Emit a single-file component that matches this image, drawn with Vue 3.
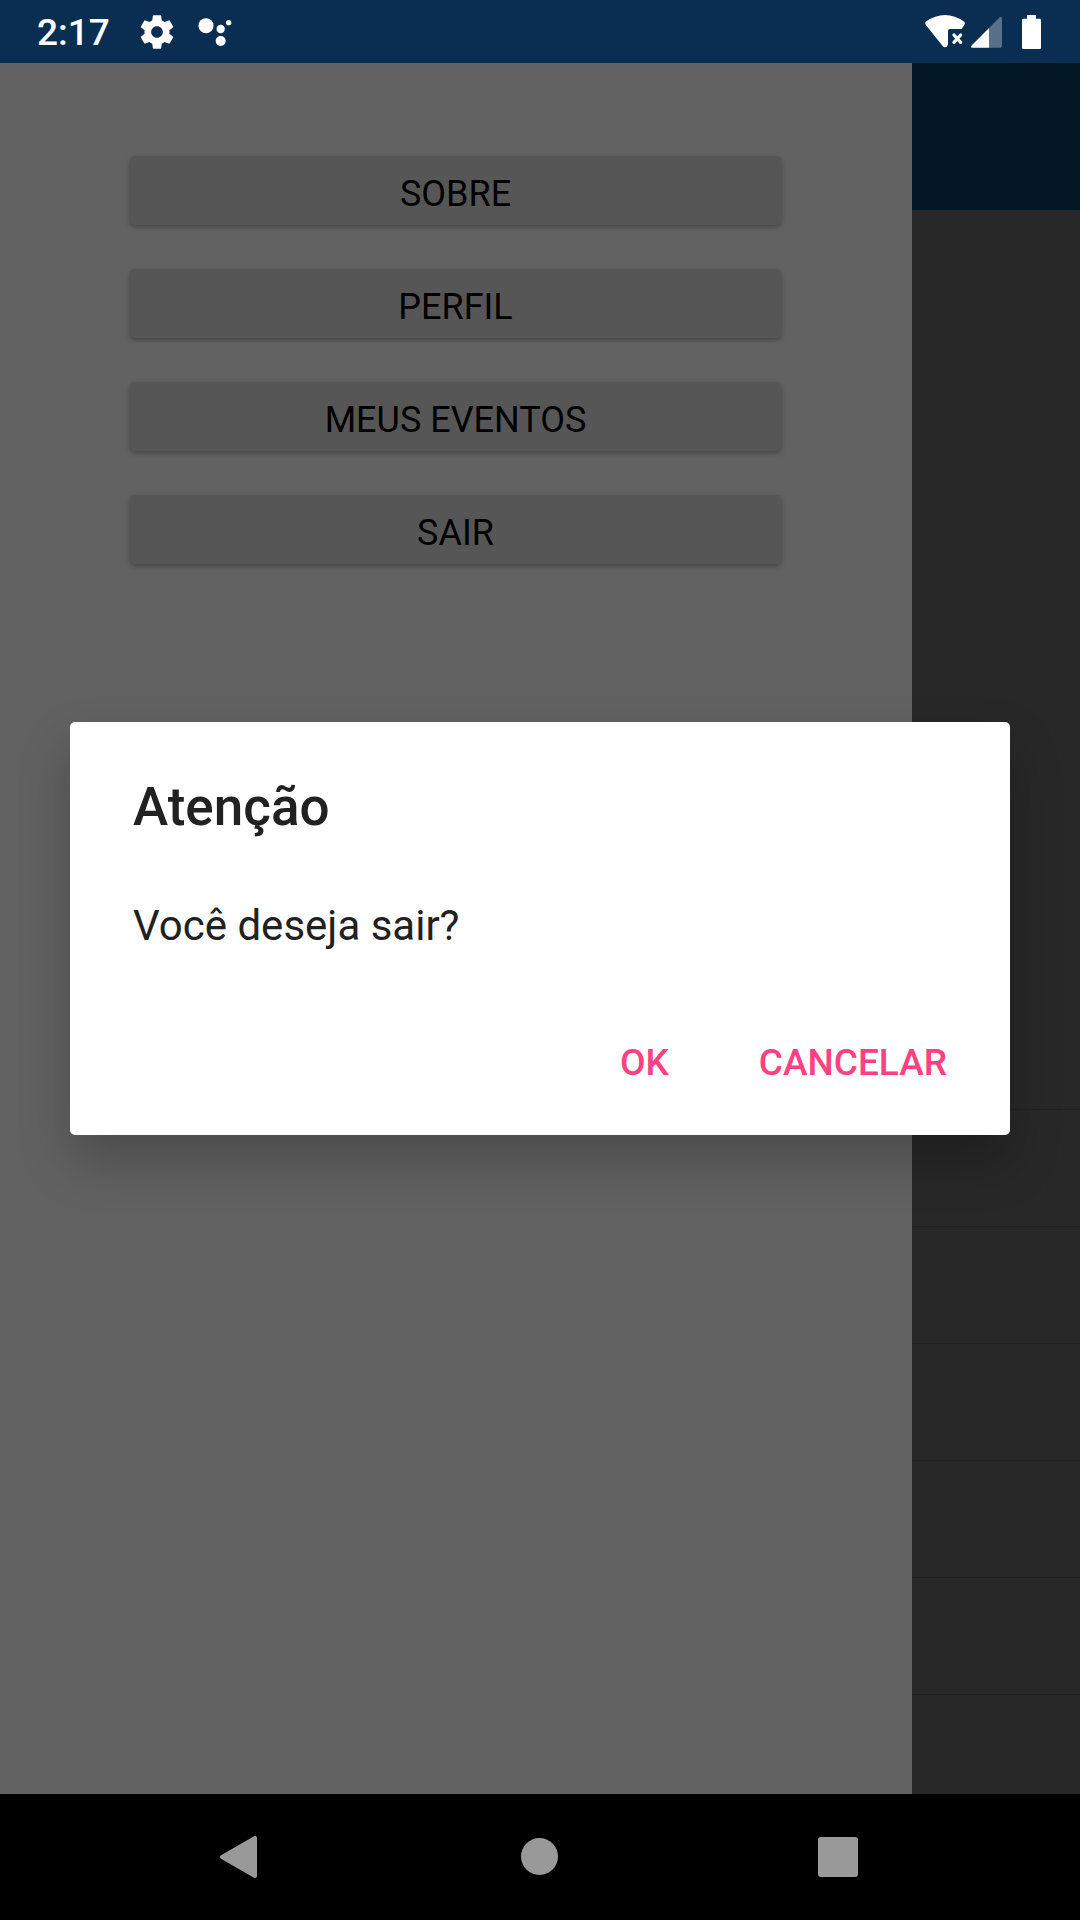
<script setup>
const menu = ['SOBRE', 'PERFIL', 'MEUS EVENTOS', 'SAIR']
const rows = 6
</script>

<template>
  <div class="screen">
    <header class="status">
      <span class="clock">2:17</span>
      <svg class="gear" width="40" height="40" viewBox="0 0 24 24" aria-hidden="true">
        <path fill="#fff" d="M19.43 12.98c.04-.32.07-.64.07-.98s-.03-.66-.07-.98l2.11-1.65c.19-.15.24-.42.12-.64l-2-3.46c-.12-.22-.39-.3-.61-.22l-2.49 1c-.52-.4-1.08-.73-1.69-.98l-.38-2.65C14.46 2.18 14.25 2 14 2h-4c-.25 0-.46.18-.49.42l-.38 2.65c-.61.25-1.17.59-1.69.98l-2.49-1c-.23-.09-.49 0-.61.22l-2 3.46c-.13.22-.07.49.12.64l2.11 1.65c-.04.32-.07.65-.07.98s.03.66.07.98l-2.11 1.65c-.19.15-.24.42-.12.64l2 3.46c.12.22.39.3.61.22l2.49-1c.52.4 1.08.73 1.69.98l.38 2.65c.03.24.24.42.49.42h4c.25 0 .46-.18.49-.42l.38-2.65c.61-.25 1.17-.59 1.69-.98l2.49 1c.23.09.49 0 .61-.22l2-3.46c.12-.22.07-.49-.12-.64l-2.11-1.65zM12 15.5c-1.93 0-3.5-1.57-3.5-3.5s1.57-3.5 3.5-3.5 3.5 1.57 3.5 3.5-1.57 3.5-3.5 3.5z" />
      </svg>
      <svg class="dots" width="34" height="28" viewBox="0 0 102 84" aria-hidden="true">
        <g fill="#fff">
          <circle cx="24" cy="23" r="22.5" />
          <circle cx="68" cy="33" r="12.5" />
          <circle cx="92" cy="14" r="8" />
          <circle cx="68" cy="69" r="15" />
        </g>
      </svg>
      <span class="grow"></span>
      <svg width="40" height="33" viewBox="0 0 120 99" aria-hidden="true">
        <path fill="#fff" d="M2 20Q60-20 118 20Q121 24 118 29L110 42H75Q69 42 69 48V89Q66 97 60 97Q56 97 53 93L2 29Q-1 24 2 20Z" />
        <path stroke="#fff" stroke-width="10" stroke-linecap="round" d="M87 60L107 82M107 60L87 82" />
      </svg>
      <svg class="signal" width="31" height="32" viewBox="0 0 93 96" aria-hidden="true">
        <path fill="#587089" d="M54 36L86 4Q93-1 93 7V90Q93 95 88 95H54Z" />
        <path fill="#fff" d="M54 36V95H3Q-2 94 1 89Z" />
      </svg>
      <svg class="battery" width="19" height="34" viewBox="0 0 57 102" aria-hidden="true">
        <path fill="#fff" d="M15 0H42V11H53Q57 11 57 15V98Q57 102 53 102H4Q0 102 0 98V15Q0 11 4 11H15Z" />
      </svg>
    </header>

    <main class="main">
      <nav class="drawer">
        <button v-for="item in menu" :key="item" class="item" type="button">{{ item }}</button>
      </nav>
      <section class="page">
        <div class="appbar"></div>
        <div class="cover"></div>
        <div v-for="n in rows" :key="n" class="row"></div>
      </section>

      <div class="overlay">
        <div class="dialog" role="alertdialog" aria-labelledby="dialog-title" aria-describedby="dialog-text">
          <h1 id="dialog-title">Atenção</h1>
          <p id="dialog-text">Você deseja sair?</p>
          <div class="actions">
            <button type="button">OK</button>
            <button type="button">CANCELAR</button>
          </div>
        </div>
      </div>
    </main>

    <footer class="navbar">
      <button type="button" aria-label="Voltar">
        <svg width="44" height="44" viewBox="0 0 44 44"><path fill="#999" stroke="#999" stroke-width="4" stroke-linejoin="round" d="M36 3V41L3 22Z" /></svg>
      </button>
      <button type="button" aria-label="Início">
        <svg width="44" height="44" viewBox="0 0 44 44"><circle cx="21.5" cy="21.5" r="18.5" fill="#999" /></svg>
      </button>
      <button type="button" aria-label="Recentes">
        <svg width="44" height="44" viewBox="0 0 44 44"><rect x="1" y="2" width="40" height="40" rx="3" fill="#999" /></svg>
      </button>
    </footer>
  </div>
</template>

<style>
body {
  margin: 0;
  background: #000;
}
</style>

<style scoped>
.screen {
  min-height: 100vh;
  display: flex;
  flex-direction: column;
  font-family: Roboto, "Noto Sans", sans-serif;
}
button {
  border: 0;
  padding: 0;
  background: none;
  font: inherit;
}
svg {
  display: block;
  flex: none;
}
.status {
  box-sizing: border-box;
  height: 63px;
  padding: 0 39px 0 37px;
  display: flex;
  align-items: center;
  background: #0a2e52;
  color: #fff;
}
.clock {
  padding-top: 3px;
  font-size: 37px;
  line-height: 44px;
  font-weight: 500;
}
.gear {
  margin-left: 27px;
}
.dots {
  margin-left: 21px;
}
.grow {
  flex: 1;
}
.signal {
  margin-left: 6px;
}
.battery {
  margin-left: 20px;
}
.main {
  position: relative;
  flex: 1;
  display: flex;
}
.drawer {
  box-sizing: border-box;
  flex: 1;
  padding: 93px 131px 0 130px;
  display: flex;
  flex-direction: column;
  gap: 44px;
  background: #626262;
}
.item {
  height: 69px;
  padding-top: 6px;
  border-radius: 5px;
  background: #565656;
  box-shadow: 0 2px 5px rgba(0, 0, 0, 0.3);
  color: #000;
  font-size: 36px;
  line-height: 44px;
}
.page {
  width: 168px;
  display: flex;
  flex-direction: column;
  background: #282828;
}
.appbar {
  height: 147px;
  background: #041724;
}
.cover {
  flex: 1;
}
.row {
  box-sizing: border-box;
  height: 117px;
  border-top: 1px solid #222;
}
.row:last-child {
  height: 100px;
}
.overlay {
  position: absolute;
  inset: 0;
  padding: 0 70px;
  display: flex;
  align-items: center;
}
.dialog {
  box-sizing: border-box;
  flex: 1;
  padding: 55px 63px 50px;
  border-radius: 5px;
  background: #fff;
  box-shadow: 0 26px 52px rgba(0, 0, 0, 0.24);
  color: #212121;
}
h1 {
  margin: 0;
  font-size: 53px;
  line-height: 60px;
  font-weight: 500;
}
p {
  margin: 64px 0 0;
  font-size: 42px;
  line-height: 50px;
}
.actions {
  margin-top: 90px;
  display: flex;
  justify-content: flex-end;
  gap: 90px;
}
.actions button {
  color: #ff4081;
  font-size: 37px;
  line-height: 44px;
  font-weight: 500;
}
.navbar {
  height: 126px;
  display: flex;
  align-items: center;
  justify-content: center;
  gap: 255px;
  background: #000;
}
</style>
